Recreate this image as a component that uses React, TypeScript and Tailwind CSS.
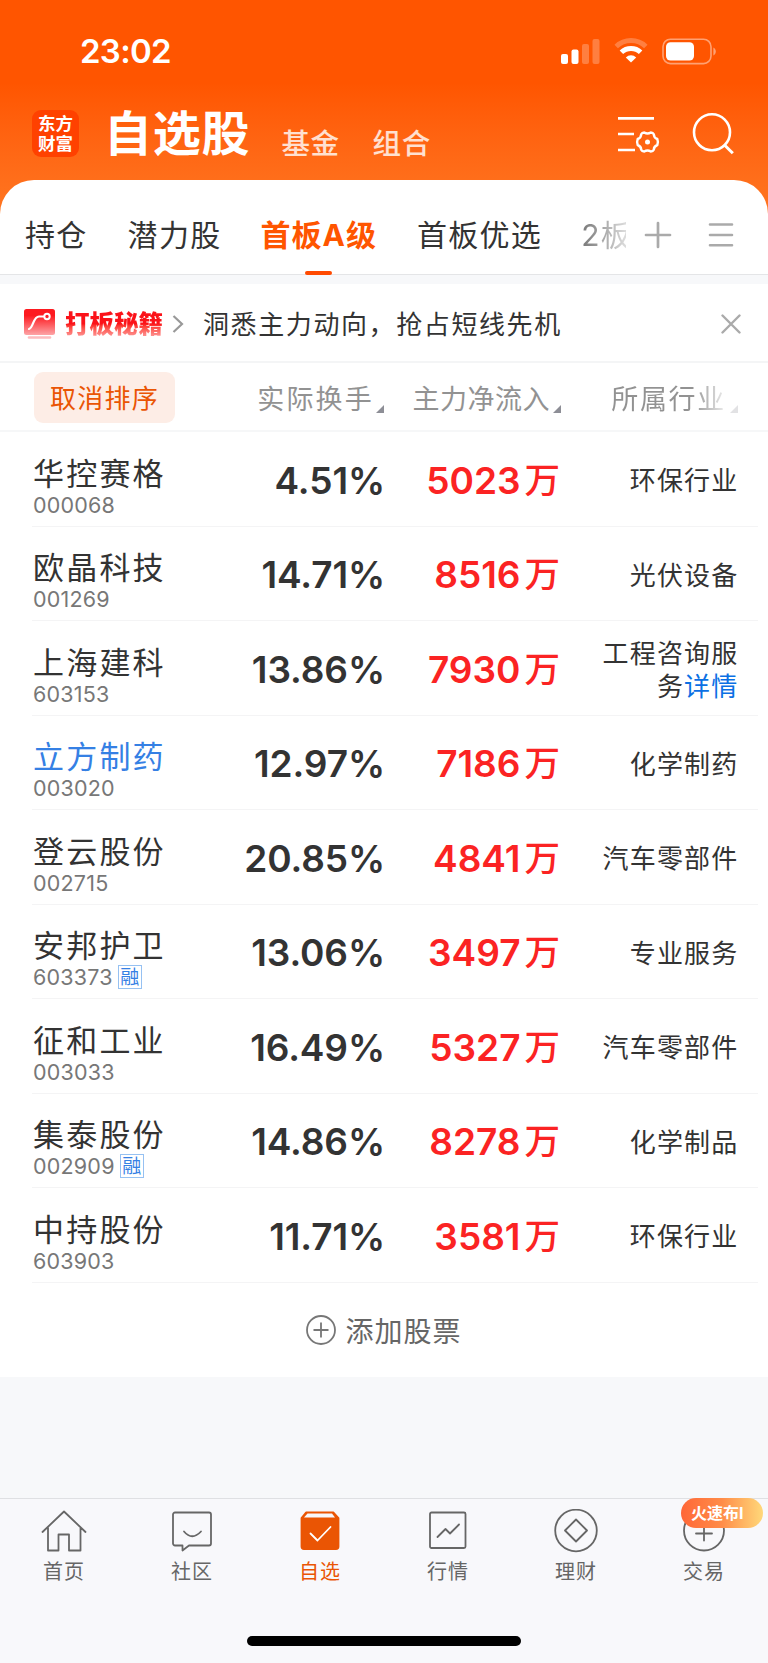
import { ReactNode } from "react";

type Stock = {
	name: string;
	code: string;
	turnover: string;
	inflow: string;
	industry: string;
	more?: boolean;
	margin?: boolean;
	active?: boolean;
};

const stocks: Stock[] = [
	{ name: "华控赛格", code: "000068", turnover: "4.51%", inflow: "5023", industry: "环保行业" },
	{ name: "欧晶科技", code: "001269", turnover: "14.71%", inflow: "8516", industry: "光伏设备" },
	{ name: "上海建科", code: "603153", turnover: "13.86%", inflow: "7930", industry: "工程咨询服务", more: true },
	{ name: "立方制药", code: "003020", turnover: "12.97%", inflow: "7186", industry: "化学制药", active: true },
	{ name: "登云股份", code: "002715", turnover: "20.85%", inflow: "4841", industry: "汽车零部件" },
	{ name: "安邦护卫", code: "603373", turnover: "13.06%", inflow: "3497", industry: "专业服务", margin: true },
	{ name: "征和工业", code: "003033", turnover: "16.49%", inflow: "5327", industry: "汽车零部件" },
	{ name: "集泰股份", code: "002909", turnover: "14.86%", inflow: "8278", industry: "化学制品", margin: true },
	{ name: "中持股份", code: "603903", turnover: "11.71%", inflow: "3581", industry: "环保行业" },
];

function StatusBar() {
	return (
		<div className="flex h-[102px] items-center justify-between pr-[50px] pl-[80px]">
			<span className="text-[33px] leading-none font-semibold tracking-[-0.7px]">23:02</span>
			<div className="flex items-center">
				<svg width="39" height="25" viewBox="0 0 39 25" fill="#fff">
					<rect x="0" y="15" width="7" height="10" rx="2" />
					<rect x="10.5" y="10.5" width="7" height="14.5" rx="2" />
					<rect x="21" y="5" width="7" height="20" rx="2" opacity=".25" />
					<rect x="31.5" y="0" width="7" height="25" rx="2" opacity=".25" />
				</svg>
				<svg className="ml-[14px]" width="34" height="26" viewBox="0 0 34 26" fill="none" stroke="#fff">
					<path d="M2.2 8.5a21.5 21.5 0 0 1 29.6 0" strokeWidth="5" opacity=".25" />
					<path d="M7.4 14.3a14 14 0 0 1 19.2 0" strokeWidth="5" />
					<path d="M17 24.6l-5.2-5.2a7.6 7.6 0 0 1 10.4 0z" fill="#fff" stroke="none" />
				</svg>
				<svg className="ml-[14px]" width="56" height="27" viewBox="0 0 56 27" fill="none">
					<rect x="1" y="1.2" width="48" height="24.4" rx="7.5" stroke="#fff" strokeWidth="1.6" opacity=".45" />
					<rect x="4" y="4.2" width="28" height="18.4" rx="4.5" fill="#fff" />
					<path d="M51.4 9.5c3.2 1.4 3.2 6.6 0 8z" fill="#fff" opacity=".45" />
				</svg>
			</div>
		</div>
	);
}

function TopNav() {
	return (
		<div className="flex h-[78px] items-start pl-8">
			<div className="mt-[8px] flex size-[47px] flex-col items-center justify-center rounded-[9px] bg-[#ff4100] text-[17.5px] leading-[19.5px] font-bold">
				<span>东方</span>
				<span>财富</span>
			</div>
			<h1 className="mt-[3px] ml-[25px] text-[48px] leading-[58px] font-bold tracking-[0.8px]">自选股</h1>
			<span className="mt-[22px] ml-[31px] text-[28.5px] leading-[40px] font-medium tracking-[0.6px] text-white/80">基金</span>
			<span className="mt-[22px] ml-[33px] text-[28.5px] leading-[40px] font-medium tracking-[0.6px] text-white/80">组合</span>
			<div className="mr-[33px] ml-auto flex items-start">
				<svg className="mt-[13px]" width="43" height="40" viewBox="0 0 43 40" fill="none" stroke="#fff" strokeWidth="2.7">
					<path d="M1 3.3h36M1 19h16M1 35h17" />
					<path
						d="M27.2 17.5q3.3 2 6.6 0q2.2.1 3 1.700q.1 3.600 3.500 4.800q1.200 3 0 6q-3.400 1.200-3.500 4.800q-.8 1.600-3 1.700q-3.300-2-6.600 0q-2.200-.1-3-1.700q-.1-3.600-3.500-4.800q-1.200-3 0-6q3.400-1.200 3.500-4.800q.8-1.600 3-1.700z"
						strokeWidth="2.4"
						strokeLinejoin="round"
					/>
					<circle cx="30.5" cy="27" r="2.5" fill="#fff" stroke="none" />
				</svg>
				<svg className="mt-[10px] ml-[32px]" width="43" height="43" viewBox="0 0 43 43" fill="none" stroke="#fff" strokeWidth="2.6">
					<circle cx="20" cy="20.3" r="18" />
					<path d="M32.5 33l8.300 8.300" strokeWidth="3" />
				</svg>
			</div>
		</div>
	);
}

function GroupTabs() {
	return (
		<div className="flex h-[95px] items-start rounded-t-[34px] border-b border-[#e4e5e7] bg-white pt-[32px] text-[30px] leading-[46px] tracking-[1.3px] text-[#333]">
			<span className="ml-[25px]">持仓</span>
			<span className="ml-[40px]">潜力股</span>
			<div className="relative ml-[39px] font-bold tracking-[1px] text-[#ff5500]">
				首板A级
				<span className="absolute top-[59px] left-[44px] h-[4px] w-[27px] rounded-full bg-[#ff4a00]" />
			</div>
			<span className="ml-[40px]">首板优选</span>
			<span className="ml-[39px] w-[45px] overflow-hidden bg-linear-to-r from-[#777] to-[#ddd] bg-clip-text whitespace-nowrap text-transparent">2板</span>
			<svg className="mt-[9px] ml-[18px]" width="28" height="28" viewBox="0 0 28 28" stroke="#aaa" strokeWidth="2.7" strokeLinecap="round">
				<path d="M2 14h24M14 2v24" />
			</svg>
			<svg className="mt-[9px] ml-[36px]" width="26" height="28" viewBox="0 0 26 28" stroke="#aaa" strokeWidth="2.6" strokeLinecap="round">
				<path d="M2 3.500h22M2 14h22M2 24.300h22" />
			</svg>
		</div>
	);
}

function Banner() {
	return (
		<div className="flex h-[79px] items-center border-b-2 border-[#f4f5f6] bg-white pt-[2px]">
			<svg className="ml-[23px]" width="34" height="32" viewBox="0 0 34 32" fill="none">
				<defs>
					<linearGradient id="badge" x1="0" y1="0" x2="0" y2="1">
						<stop offset=".25" stopColor="#fd1a20" />
						<stop offset="1" stopColor="#fda4a6" />
					</linearGradient>
				</defs>
				<rect x="1" y="1" width="31" height="26" rx="2.5" fill="url(#badge)" />
				<path d="M6 21c4.500-1 4-12.500 10-12.500h5" stroke="#fff" strokeWidth="2.2" strokeLinecap="round" />
				<circle cx="24" cy="8.500" r="2.7" stroke="#fff" strokeWidth="2" />
				<path d="M6 29.500h21" stroke="#fdbcbe" strokeWidth="2.6" strokeLinecap="round" />
			</svg>
			<span className="ml-[8px] bg-linear-to-b from-[#fb1219] from-50% to-[#fc9a9c] to-90% bg-clip-text text-[24.5px] leading-[34px] font-black text-transparent">
				打板秘籍
			</span>
			<svg className="ml-[9px]" width="12" height="20" viewBox="0 0 12 20" fill="none" stroke="#999" strokeWidth="2.2">
				<path d="M1.500 2l8.500 8-8.500 8" />
			</svg>
			<span className="mt-[2px] ml-[19px] text-[26px] leading-[40px] tracking-[1.6px] text-[#333]">洞悉主力动向，抢占短线先机</span>
			<svg className="mr-[27px] ml-auto" width="20" height="20" viewBox="0 0 20 20" stroke="#aaa" strokeWidth="2.4" strokeLinecap="round">
				<path d="M1.500 1.500l17 17M18.500 1.500l-17 17" />
			</svg>
		</div>
	);
}

function SortMark({ className }: { className: string }) {
	return (
		<svg className={className} width="8" height="8" viewBox="0 0 8 8">
			<path d="M8 0v8H0z" fill="#8d8e96" />
		</svg>
	);
}

function TableHead() {
	return (
		<div className="flex h-[69px] items-center border-b-2 border-[#f6f7f8] bg-white pt-[2px] text-[27px] leading-[40px] text-[#929292]">
			<button className="ml-[34px] h-[51px] w-[141px] rounded-[9px] bg-[#fdede6] pt-[2px] text-center text-[26px] tracking-[1.3px] text-[#ea5504]">
				取消排序
			</button>
			<div className="flex w-[209px] items-end justify-end tracking-[2.2px]">
				<span className="relative top-[2px]">实际换手</span>
				<SortMark className="mb-[5px] ml-[2px]" />
			</div>
			<div className="flex w-[177px] items-end justify-end tracking-[0.5px]">
				<span className="relative top-[2px]">主力净流入</span>
				<SortMark className="mb-[5px] ml-[3px]" />
			</div>
			<div className="flex w-[177px] items-end justify-end tracking-[1.7px]">
				<span className="relative top-[2px] bg-linear-to-r from-[#929292] from-70% to-[#eee] bg-clip-text text-transparent">
					所属行业
				</span>
				<SortMark className="mb-[5px] ml-[4px] opacity-25" />
			</div>
		</div>
	);
}

function StockRow({ stock }: { stock: Stock }) {
	return (
		<div className="mr-[10px] ml-[32px] flex h-[94.5px] items-center border-b-[1.5px] border-[#f4f4f5]">
			<div className="h-full w-[169px] pt-[21.5px] pl-px">
				<div
					className={
						stock.active
							? "text-[31px] leading-[40px] tracking-[2.2px] text-[#3580e4]"
							: "text-[31px] leading-[40px] tracking-[2.2px] text-[#333]"
					}
				>
					{stock.name}
				</div>
				<div className="-mt-px flex h-[24px] items-center text-[21.5px] leading-[24px] tracking-[0.2px] text-[#777]">
					{stock.code}
					{stock.margin && (
						<span className="ml-[5px] flex size-[24px] items-center justify-center border-[1.5px] border-[#96c1f2] text-[19px] leading-none tracking-normal text-[#3580e4]">
							融
						</span>
					)}
				</div>
			</div>
			<div className="w-[184px] pt-[3px] text-right text-[37px] font-semibold tracking-[-0.1px] text-[#333]">{stock.turnover}</div>
			<div className="flex w-[175px] items-center justify-end pt-[3px] text-[37px] font-semibold text-[#fb2323]">
				{stock.inflow}
				<span className="ml-[4px] text-[35.5px] font-medium">万</span>
			</div>
			<div className="ml-auto w-[160px] pt-[4px] pr-[19.5px] text-right text-[26px] leading-[33px] tracking-[1.2px] text-[#333]">
				{stock.industry}
				{stock.more && <span className="text-[#0b70e4]">详情</span>}
			</div>
		</div>
	);
}

function NavItem({ label, active, children }: { label: string; active?: boolean; children: ReactNode }) {
	return (
		<div className="flex flex-1 flex-col items-center pt-[10px]">
			<svg
				width="46"
				height="46"
				viewBox="0 0 46 46"
				fill="none"
				stroke={active ? "#ea5504" : "#666"}
				strokeWidth="1.8"
				strokeLinejoin="round"
				strokeLinecap="round"
			>
				{children}
			</svg>
			<span
				className={
					active
						? "mt-[2px] text-[20px] leading-[30px] tracking-[1px] text-[#ea5504]"
						: "mt-[2px] text-[20px] leading-[30px] tracking-[1px] text-[#666]"
				}
			>
				{label}
			</span>
		</div>
	);
}

function BottomNav() {
	return (
		<nav className="flex h-[165px] flex-col items-center justify-between border-t border-[#dfe0e3] bg-[#f8f8fb] pb-[17px]">
			<div className="flex w-full">
				<NavItem label="首页">
					<path d="M1.500 23L23 2.500 44.500 23M7 19v22.500h10.500V25.500h10.500v16h11.500V19" />
				</NavItem>
				<NavItem label="社区">
					<path d="M6 3.500h34a2 2 0 0 1 2 2v29a2 2 0 0 1-2 2H20l-6.500 5v-5H6a2 2 0 0 1-2-2v-29a2 2 0 0 1 2-2z" />
					<path d="M15 22.500q8 9.500 17 0" />
				</NavItem>
				<NavItem label="自选" active>
					<path d="M9 3.500h27.500l5 5.500v28.500a2.500 2.500 0 0 1-2.500 2.500H7a2.500 2.500 0 0 1-2.500-2.500V9z" fill="#ea5504" />
					<path d="M10.500 4.500h24.500l3 4H7z" fill="#f8f8fb" stroke="none" />
					<path d="M13.500 24.500l7 7 13-13.500" stroke="#fff" />
				</NavItem>
				<NavItem label="行情">
					<rect x="5" y="3.5" width="35.5" height="35.5" rx="1.5" />
					<path d="M12.500 28l8-8 4.500 4.500 9-9" />
				</NavItem>
				<NavItem label="理财">
					<circle cx="23" cy="21.5" r="20.8" />
					<path d="M23 10.500l11 11-11 11-11-11z" />
				</NavItem>
				<NavItem label="交易">
					<circle cx="23" cy="21.5" r="20" />
					<path d="M15 24.500h16M23 16.500v15" />
				</NavItem>
			</div>
			<div className="h-[10px] w-[274px] rounded-full bg-black" />
		</nav>
	);
}

export default function App() {
	return (
		<div className="flex h-[1663px] w-[768px] flex-col overflow-hidden bg-[#f7f8fa] font-['Inter','Noto_Sans_CJK_SC',sans-serif]">
			<header className="bg-linear-to-b from-[#ff5500] from-30% to-[#ff741f] to-75% text-white">
				<StatusBar />
				<TopNav />
				<GroupTabs />
			</header>
			<div className="mt-[9px]">
				<Banner />
			</div>
			<TableHead />
			<main className="bg-white">
				{stocks.map((s) => (
					<StockRow key={s.code} stock={s} />
				))}
				<button className="flex h-[94px] w-full items-center justify-center text-[28px] tracking-[1px] text-[#666]">
					<svg className="mr-[9px]" width="30" height="30" viewBox="0 0 30 30" fill="none" stroke="#777" strokeWidth="1.8">
						<circle cx="15" cy="15" r="14" />
						<path d="M7.500 15h15M15 7.500v15" />
					</svg>
					<span className="mt-[4px]">添加股票</span>
				</button>
			</main>
			<div className="relative mt-auto">
				<BottomNav />
				<span className="absolute top-0 right-[5px] h-[30px] w-[82px] rounded-full bg-linear-to-r from-[#ff6637] via-[#ff8c48] to-[#ffd87a] pl-[10px] text-[16px] leading-[30px] font-bold whitespace-nowrap text-white">
					火速布I
				</span>
			</div>
		</div>
	);
}
